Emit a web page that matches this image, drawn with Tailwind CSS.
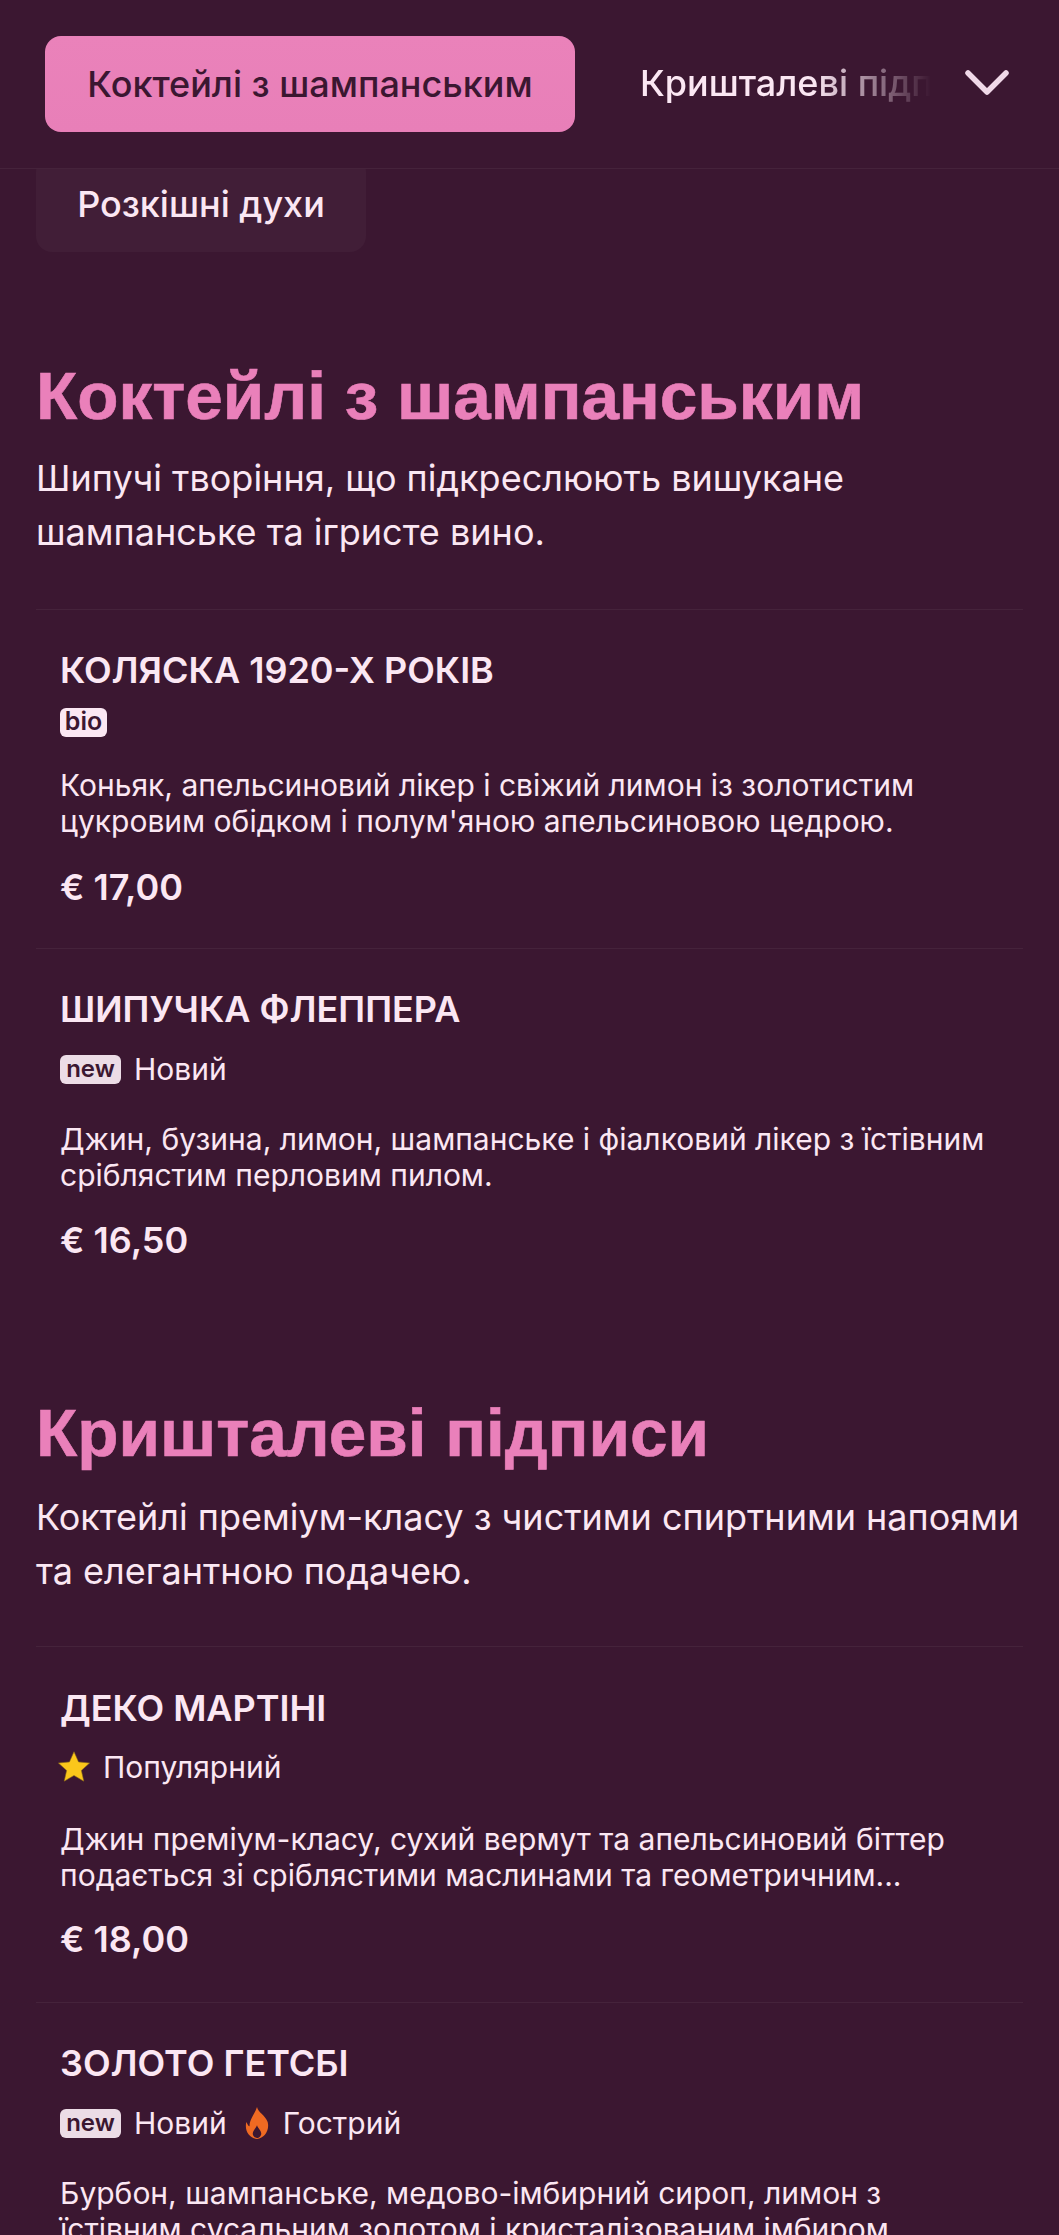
<!DOCTYPE html>
<html lang="uk">
<head>
<meta charset="utf-8">
<script src="https://cdn.jsdelivr.net/npm/@tailwindcss/browser@4"></script>
<title>Меню</title>
</head>
<body class="bg-[#3b1731] font-['Inter','Noto_Sans',sans-serif] text-[#fbe7f3]">
<div class="h-[2235px] overflow-hidden">
  <header class="relative z-10 flex h-[169px] items-start border-b border-white/5 bg-[#3b1731] pl-[45px] pt-[36px]">
    <span class="flex h-[96px] w-[530px] shrink-0 items-center justify-center rounded-[16px] bg-gradient-to-b from-[#ea82ba] to-[#e87fb8] text-[36px] font-medium text-[#3b1731]">Коктейлі з шампанським</span>
    <span class="ml-[65px] mt-[27px] w-[291px] shrink-0 overflow-hidden whitespace-nowrap text-[36px] font-medium leading-[40px] [mask-image:linear-gradient(to_right,black_60%,transparent_100%)]">Кришталеві підписи</span>
    <svg class="ml-[33px] mt-[32px] h-[30px] w-[46px]" viewBox="0 0 46 30" fill="none" stroke="#f0d9e8" stroke-width="5.5" stroke-linecap="round" stroke-linejoin="round"><path d="M4 5 L23 24 L42 5"/></svg>
  </header>
  <main class="px-[36px]">
    <div class="-mt-[13px] flex h-[96px] w-[330px] items-center justify-center rounded-[16px] bg-white/[0.03] text-[36px] font-medium">Розкішні духи</div>

    <section class="mt-[108px]">
      <h2 class="font-['Liberation_Sans',Arial,sans-serif] text-[67.5px] font-bold leading-[72px] text-[#ea80ba] [-webkit-text-stroke:0.6px_#ea80ba]">Коктейлі з шампанським</h2>
      <p class="mt-[19px] text-[36px] leading-[54px]">Шипучі творіння, що підкреслюють вишукане шампанське та ігристе вино.</p>
      <div class="mt-[50px]">
        <article class="h-[339px] border-t border-white/5 px-[24px] pt-[38px]">
          <h3 class="text-[36px] font-semibold leading-[44px]">КОЛЯСКА 1920-Х РОКІВ</h3>
          <div class="mt-[14px] flex h-[32px] items-center"><span class="flex h-[29px] w-[47px] items-center justify-center rounded-[6px] bg-[#fbe7f3] text-[25px] font-semibold text-[#3b1731]">bio</span></div>
          <p class="mt-[29px] text-[30px] leading-[36px]">Коньяк, апельсиновий лікер і свіжий лимон із золотистим цукровим обідком і полум'яною апельсиновою цедрою.</p>
          <p class="mt-[26px] text-[36px] font-semibold leading-[44px]">€ 17,00</p>
        </article>
        <article class="border-t border-white/5 px-[24px] pt-[38px]">
          <h3 class="text-[36px] font-semibold leading-[44px]">ШИПУЧКА ФЛЕППЕРА</h3>
          <div class="mt-[22px] flex h-[32px] items-center gap-[13px] text-[30px]"><span class="flex h-[29px] w-[61px] items-center justify-center rounded-[6px] bg-[#ecdce6] text-[24px] font-semibold text-[#3b1731]">new</span>Новий</div>
          <p class="mt-[36px] text-[30px] leading-[36px]">Джин, бузина, лимон, шампанське і фіалковий лікер з їстівним сріблястим перловим пилом.</p>
          <p class="mt-[25px] text-[36px] font-semibold leading-[44px]">€ 16,50</p>
        </article>
      </div>
    </section>

    <section class="mt-[135px]">
      <h2 class="font-['Liberation_Sans',Arial,sans-serif] text-[67.5px] font-bold leading-[72px] text-[#ea80ba] [-webkit-text-stroke:0.6px_#ea80ba]">Кришталеві підписи</h2>
      <p class="mt-[21px] text-[36px] leading-[54px]">Коктейлі преміум-класу з чистими спиртними напоями та елегантною подачею.</p>
      <div class="mt-[48px]">
        <article class="h-[356px] border-t border-white/5 px-[24px] pt-[39px]">
          <h3 class="text-[36px] font-semibold leading-[44px]">ДЕКО МАРТІНІ</h3>
          <div class="mt-[21px] -ml-[3px] flex h-[32px] items-center gap-[12px] text-[30px]"><svg class="h-[34px] w-[34px]" viewBox="0 0 24 24"><path fill="#fbc71b" stroke="#8a6a1a" stroke-width="0.4" d="M12 1.2l3.2 7.2 7.8.8-5.8 5.2 1.7 7.6-6.9-4-6.9 4 1.7-7.6L1 9.2l7.8-.8z"/></svg>Популярний</div>
          <p class="mt-[38px] text-[30px] leading-[36px]">Джин преміум-класу, сухий вермут та апельсиновий біттер подається зі сріблястими маслинами та геометричним...</p>
          <p class="mt-[24px] text-[36px] font-semibold leading-[44px]">€ 18,00</p>
        </article>
        <article class="border-t border-white/5 px-[24px] pt-[38px]">
          <h3 class="text-[36px] font-semibold leading-[44px]">ЗОЛОТО ГЕТСБІ</h3>
          <div class="mt-[22px] flex h-[32px] items-center gap-[13px] text-[30px]"><span class="flex h-[29px] w-[61px] items-center justify-center rounded-[6px] bg-[#ecdce6] text-[24px] font-semibold text-[#3b1731]">new</span>Новий<svg class="ml-[4px] h-[32px] w-[26px]" viewBox="0 0 24 30"><path fill="#ef6a22" d="M12 0c1 5 8 8 10 14 2 8-3 15-10 16C5 29 0 23 2 14c1 2 2 4 3 4 0-7 5-11 7-18z"/><path fill="#3b1731" d="M12 17c1 3 4 5 4 8 0 2-2 4-4 4s-4-2-4-4c0-3 3-5 4-8z"/></svg>Гострий</div>
          <p class="mt-[36px] text-[30px] leading-[36px]">Бурбон, шампанське, медово-імбирний сироп, лимон з їстівним сусальним золотом і кристалізованим імбиром.</p>
        </article>
      </div>
    </section>
  </main>
</div>
</body>
</html>
